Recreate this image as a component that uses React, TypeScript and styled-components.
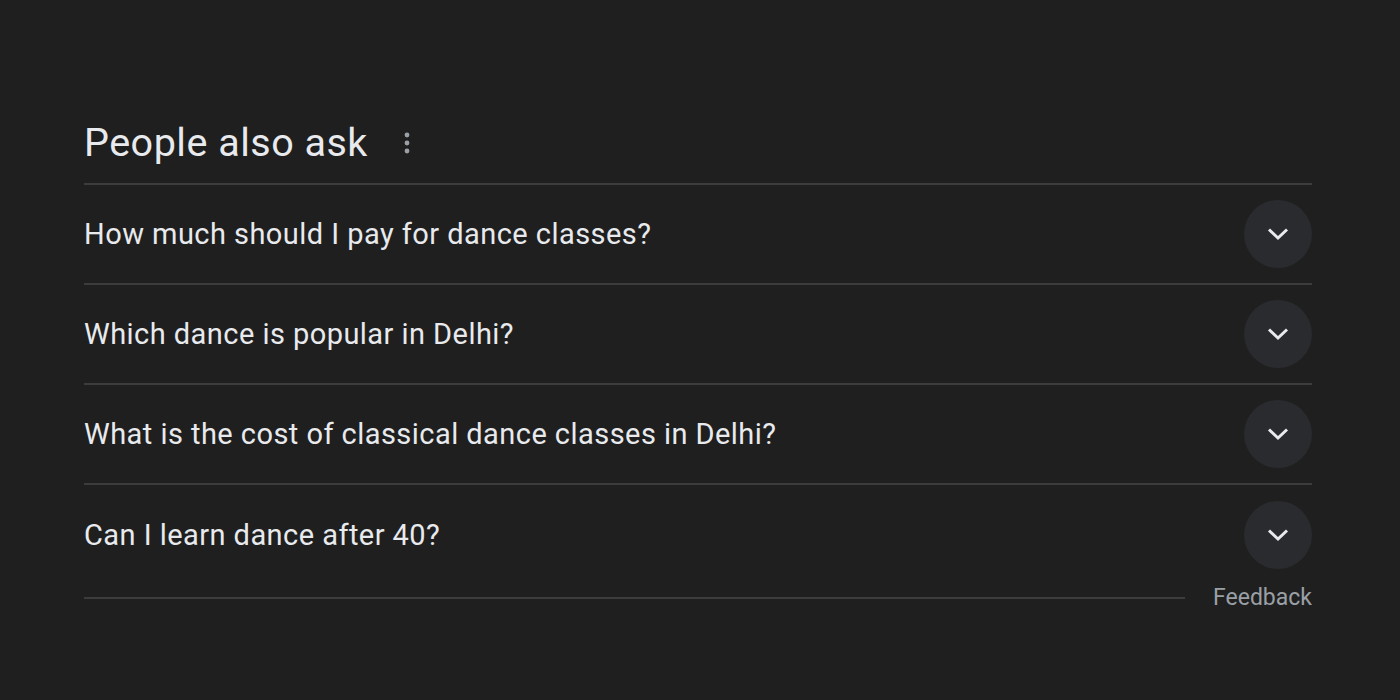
import styled, { createGlobalStyle } from "styled-components";

const questions = [
  "How much should I pay for dance classes?",
  "Which dance is popular in Delhi?",
  "What is the cost of classical dance classes in Delhi?",
  "Can I learn dance after 40?",
];

export default function App() {
  return (
    <>
      <GlobalStyle />
      <Page>
        <Header>
          <Title>People also ask</Title>
          <MoreButton aria-label="More options">
            <svg width="6" height="22" viewBox="0 0 6 22">
              <circle cx="3" cy="3" r="2.4" fill="#9aa0a6" />
              <circle cx="3" cy="11" r="2.4" fill="#9aa0a6" />
              <circle cx="3" cy="19" r="2.4" fill="#9aa0a6" />
            </svg>
          </MoreButton>
        </Header>
        <List>
          {questions.map((q) => (
            <Row key={q}>
              <Question>{q}</Question>
              <Toggle aria-label="Expand">
                <svg width="24" height="14" viewBox="0 0 24 14">
                  <path
                    d="M3 2.5 L12 11 L21 2.5"
                    fill="none"
                    stroke="#e8eaed"
                    strokeWidth="3"
                  />
                </svg>
              </Toggle>
            </Row>
          ))}
        </List>
        <Footer>
          <FooterLine />
          <Feedback>Feedback</Feedback>
        </Footer>
      </Page>
    </>
  );
}

const GlobalStyle = createGlobalStyle`
  body {
    margin: 0;
    background: #1f1f1f;
    font-family: Roboto, "Liberation Sans", Arial, sans-serif;
    overflow: hidden;
  }
`;

const Page = styled.div`
  width: 1228px;
  padding: 107px 0 0 84px;
`;

const Header = styled.div`
  display: flex;
  align-items: center;
  height: 78px;
  border-bottom: 2px solid #3c3c3c;
  box-sizing: border-box;
  padding-bottom: 6px;
`;

const Title = styled.h2`
  margin: 0;
  font-size: 39.5px;
  font-weight: 400;
  color: #e8eaed;
  letter-spacing: 0.5px;
`;

const MoreButton = styled.div`
  display: flex;
  margin-left: 36px;
  margin-top: 2px;
`;

const List = styled.div`
  display: flex;
  flex-direction: column;
`;

const Row = styled.div`
  display: flex;
  align-items: center;
  justify-content: space-between;
  height: 100px;
  border-bottom: 2px solid #3c3c3c;
  box-sizing: border-box;

  &:last-child {
    border-bottom: none;
  }
`;

const Question = styled.span`
  font-size: 29px;
  color: #e8eaed;
  letter-spacing: 0.45px;
`;

const Toggle = styled.div`
  width: 68px;
  height: 68px;
  border-radius: 50%;
  background: #2a2b2e;
  display: flex;
  align-items: center;
  justify-content: center;
`;

const Footer = styled.div`
  display: flex;
  align-items: center;
  gap: 28px;
  margin-top: -1px;
`;

const FooterLine = styled.div`
  flex: 1;
  height: 2px;
  background: #3c3c3c;
`;

const Feedback = styled.span`
  font-size: 23px;
  color: #9aa0a6;
`;
